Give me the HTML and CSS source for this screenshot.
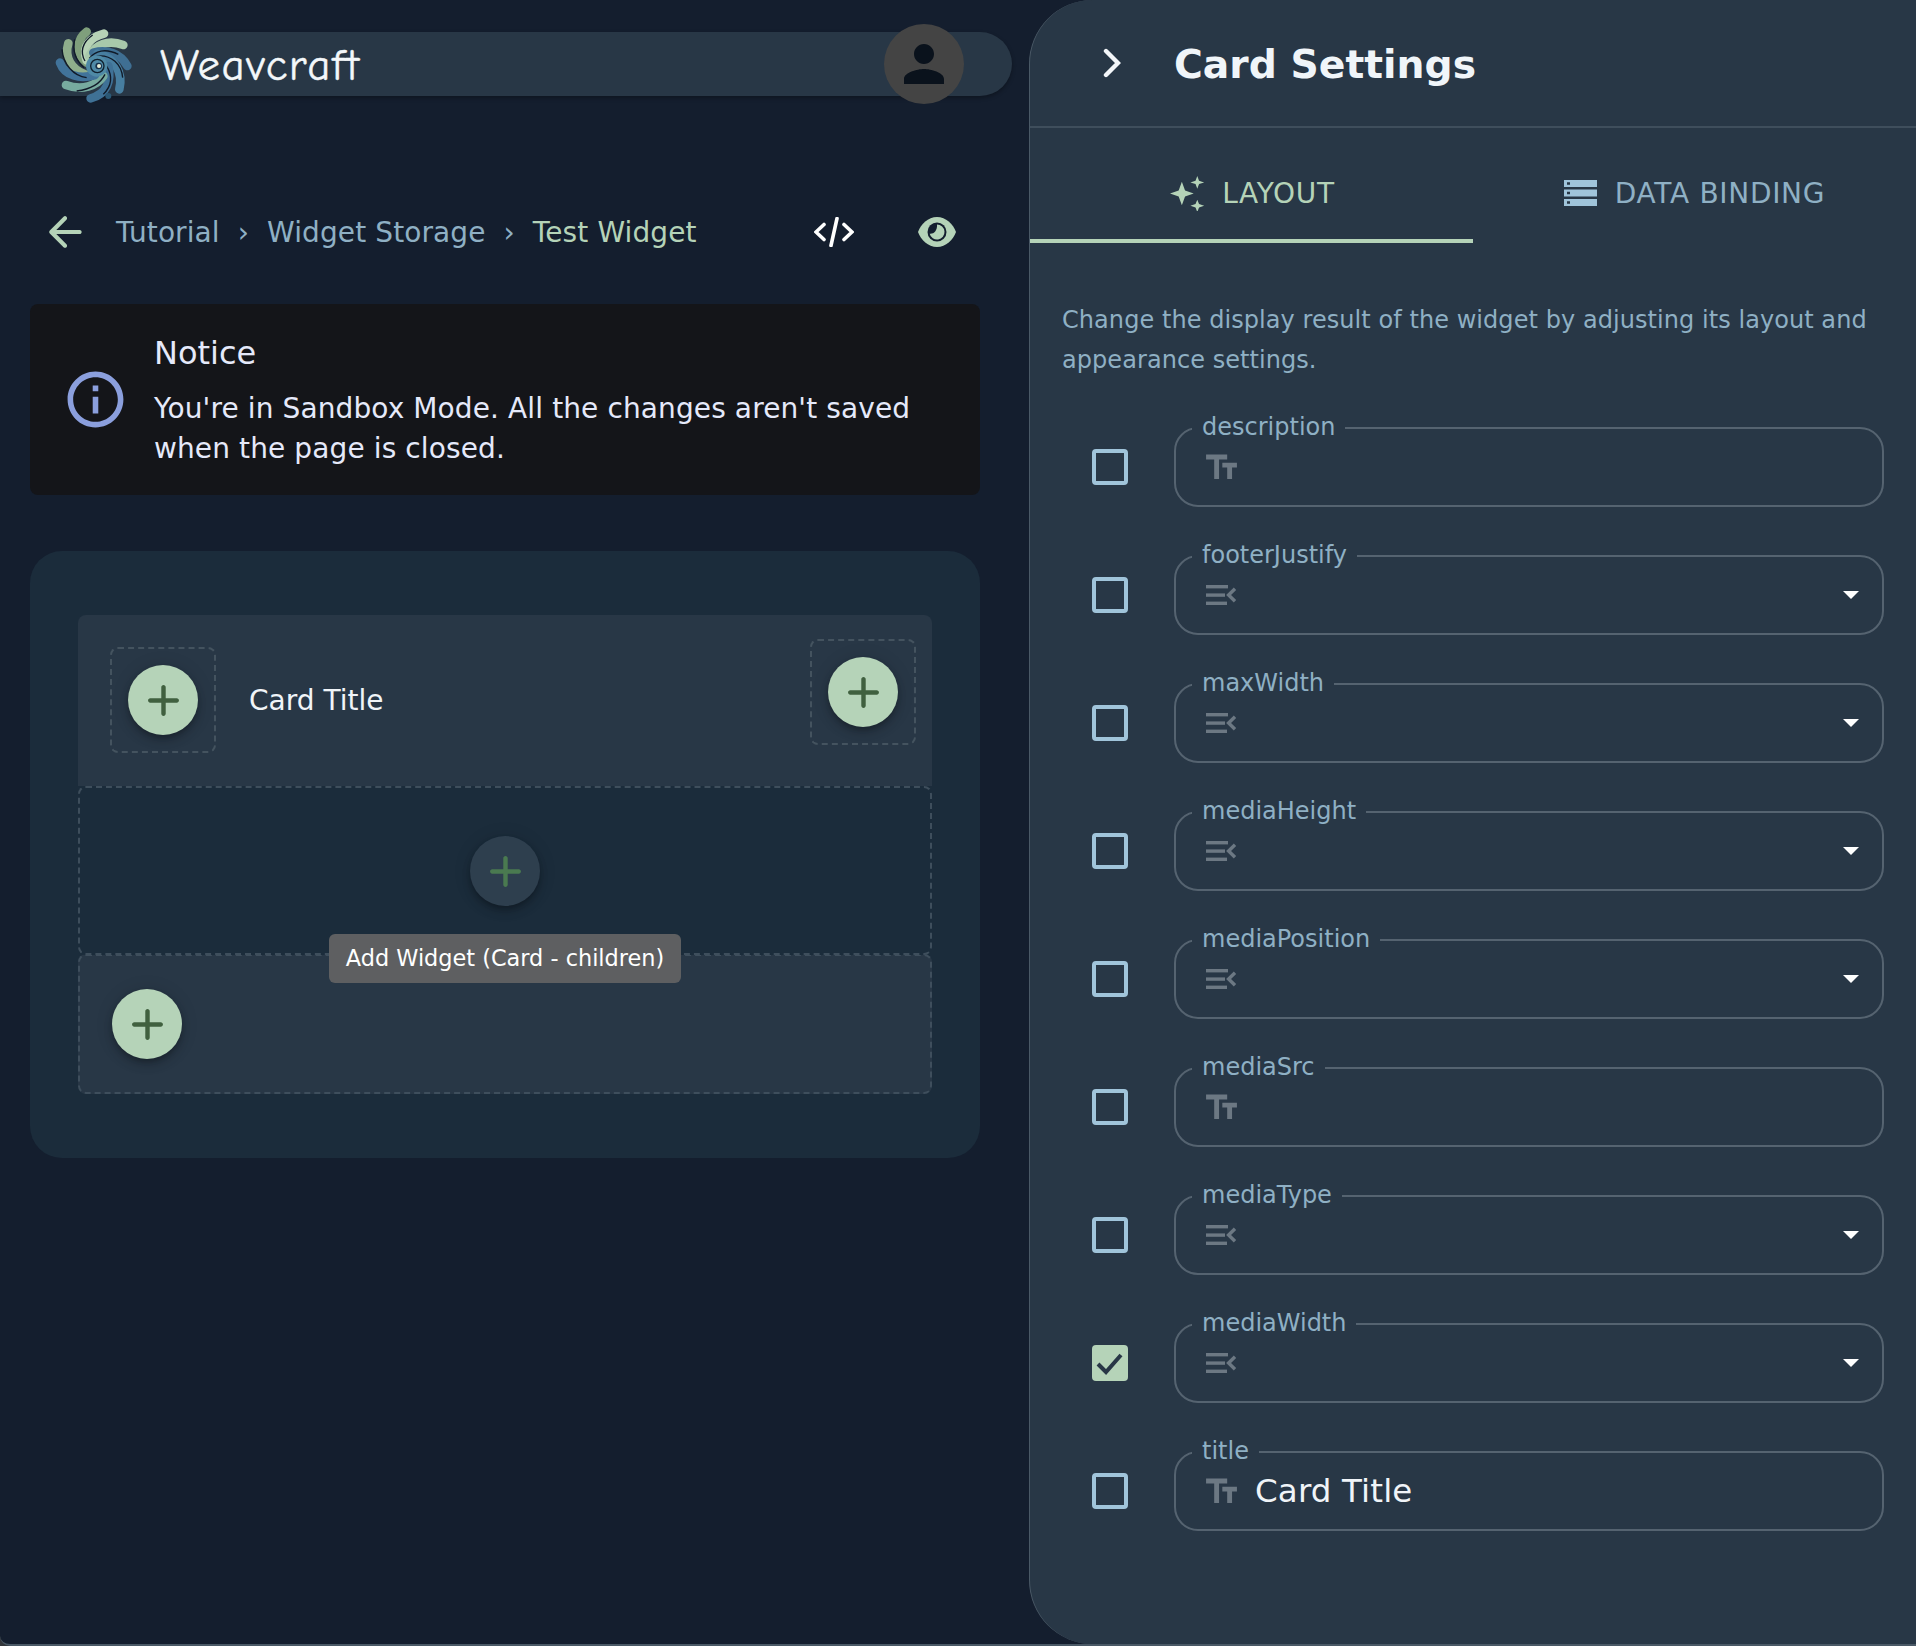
FILE: index.html
```html
<!DOCTYPE html>
<html lang="en">
<head>
<meta charset="utf-8">
<title>Weavcraft</title>
<link rel="stylesheet" href="styles.css">
</head>
<body>
<svg class="defs" width="0" height="0">
  <defs>
    <path id="i-add" d="M18 13h-5v5c0 .55-.45 1-1 1s-1-.45-1-1v-5H6c-.55 0-1-.45-1-1s.45-1 1-1h5V6c0-.55.45-1 1-1s1 .45 1 1v5h5c.55 0 1 .45 1 1s-.45 1-1 1z"/>
    <path id="i-text" d="M2.5 4v3h5v12h3V7h5V4h-13zm19 5h-9v3h3v7h3v-7h3V9z"/>
    <g id="i-sort">
      <rect x="0" y="0" width="22" height="3.4"/>
      <rect x="0" y="8.4" width="19" height="3.4"/>
      <rect x="0" y="16.6" width="21" height="3.4"/>
      <path d="M29 3.800l-6.400 6.200 6.400 6.200" fill="none" stroke="currentColor" stroke-width="3.400"/>
    </g>
  </defs>
</svg>
<main class="app">
  <section class="left">
    <header class="bar">
      <svg class="logo" viewBox="0 0 330 300" aria-hidden="true">
        <g fill="none" stroke-linecap="round" stroke-width="26">
          <path d="M85 97C72 140 95 175 135 190" stroke="#8fae8c"/>
          <path d="M140 62C108 85 108 130 140 155" stroke="#7f9f7c"/>
          <path d="M192 68C150 80 125 105 140 148" stroke="#b7d3b6"/>
          <path d="M250 102C205 85 165 100 148 135" stroke="#a9c9ab"/>
          <path d="M262 165C240 125 200 115 160 125" stroke="#3f6f93"/>
          <path d="M238 235C250 185 225 140 172 128" stroke="#477ea0"/>
          <path d="M152 262C200 250 215 210 205 165" stroke="#3f7196"/>
          <path d="M78 222C125 240 170 225 190 195" stroke="#77ab9f"/>
          <path d="M60 155C75 195 120 205 165 192" stroke="#41739a"/>
        </g>
        <g fill="none" stroke="#101a28" stroke-width="4">
          <path d="M66 115C70 160 100 195 140 200"/>
          <path d="M104 85C95 125 110 150 132 170"/>
          <path d="M158 72C125 95 120 125 135 150"/>
          <path d="M235 130C195 110 165 120 148 142"/>
          <path d="M248 200C245 160 215 130 170 135"/>
          <path d="M190 250C215 225 218 195 200 165"/>
          <path d="M110 240C150 235 180 220 195 190"/>
        </g>
        <circle cx="205" cy="255" r="9" fill="#2b5875"/>
        <circle cx="170" cy="165" r="32" fill="#4f8aa6"/>
        <circle cx="172" cy="165" r="20" fill="none" stroke="#10202e" stroke-width="4"/>
        <circle cx="176" cy="165" r="10" fill="#16304a"/>
        <circle cx="177" cy="165" r="6" fill="#e6efd9"/>
      </svg>
      <span class="brand">Weavcraft</span>
      <span class="avatar">
        <svg viewBox="0 0 24 24" class="avatar-icon"><path d="M12 12c2.21 0 4-1.79 4-4s-1.79-4-4-4-4 1.79-4 4 1.79 4 4 4zm0 2c-2.67 0-8 1.34-8 4v2h16v-2c0-2.66-5.33-4-8-4z"/></svg>
      </span>
    </header>

    <nav class="crumbs">
      <svg class="back" viewBox="0 0 24 24"><path d="M19 11H7.83l4.88-4.88c.39-.39.39-1.03 0-1.42a.9959.9959 0 0 0-1.41 0l-6.59 6.59c-.39.39-.39 1.02 0 1.41l6.59 6.59c.39.39 1.02.39 1.41 0 .39-.39.39-1.02 0-1.41L7.83 13H19c.55 0 1-.45 1-1s-.45-1-1-1z"/></svg>
      <ol class="trail">
        <li>Tutorial</li>
        <li class="sep">›</li>
        <li>Widget Storage</li>
        <li class="sep">›</li>
        <li class="current">Test Widget</li>
      </ol>
      <svg class="code" viewBox="0 0 40 30"><path d="M10 7.5L2 15l8 7.5M30 7.5L38 15l-8 7.5M23 1.5L17 28.5" fill="none" stroke="#fff" stroke-width="3.6" stroke-linecap="round" stroke-linejoin="miter"/></svg>
      <svg class="eye" viewBox="0 0 38 30"><path d="M19 0C10 0 3 7 0 15c3 8 10 15 19 15s16-7 19-15C35 7 28 0 19 0z" fill="#b5d3b8"/><circle cx="19" cy="15" r="9.5" fill="#141e2e"/><path d="M19 7.5a7.5 7.5 0 1 1-7.3 9.2c3.6.6 7.8-2.6 7.3-9.2z" fill="#b5d3b8"/></svg>
    </nav>

    <aside class="notice">
      <svg class="notice-icon" viewBox="0 0 24 24"><path d="M11 7h2v2h-2zm0 4h2v6h-2zm1-9C6.48 2 2 6.48 2 12s4.48 10 10 10 10-4.48 10-10S17.52 2 12 2zm0 18c-4.41 0-8-3.59-8-8s3.59-8 8-8 8 3.59 8 8-3.59 8-8 8z"/></svg>
      <div class="notice-body">
        <h2 class="notice-title">Notice</h2>
        <p class="notice-text">You're in Sandbox Mode. All the changes aren't saved when the page is closed.</p>
      </div>
    </aside>

    <div class="canvas">
      <article class="card">
        <div class="card-head">
          <div class="slot">
            <button class="fab"><svg viewBox="0 0 24 24"><use href="#i-add"/></svg></button>
          </div>
          <span class="card-title">Card Title</span>
          <div class="slot slot-end">
            <button class="fab"><svg viewBox="0 0 24 24"><use href="#i-add"/></svg></button>
          </div>
        </div>
        <div class="card-body">
          <button class="fab fab-off"><svg viewBox="0 0 24 24"><use href="#i-add"/></svg></button>
          <div class="tooltip">Add Widget (Card - children)</div>
        </div>
        <div class="card-foot">
          <button class="fab"><svg viewBox="0 0 24 24"><use href="#i-add"/></svg></button>
        </div>
      </article>
    </div>
  </section>

  <section class="panel">
    <header class="panel-head">
      <svg class="chev" viewBox="0 0 18 30"><path d="M3 3l12 12L3 27" fill="none" stroke="#f3f6f9" stroke-width="4.4" stroke-linecap="round" stroke-linejoin="miter"/></svg>
      <h1 class="panel-title">Card Settings</h1>
    </header>
    <div class="tabs">
      <div class="tab tab-on">
        <svg class="tab-icon spark" viewBox="0 0 35 34"><path d="M12.5 5.500L15.600 14l8.400 3-8.400 3-3.100 8.500L9.400 20 1 17l8.400-3zM27.500 0l1.700 4.500 5 1.700-5 1.600L27.500 12.500 25.800 7.800l-5-1.600 5-1.700zM27.500 23l1.700 4.300 5 1.700-5 1.600L27.500 35l-1.700-4.400-5-1.600 5-1.700z" fill="currentColor"/></svg>
        <span>LAYOUT</span>
      </div>
      <div class="tab">
        <svg class="tab-icon" viewBox="0 0 33 26"><path d="M0 0h33v7H0zM0 9.500h33v7H0zM0 19h33v7H0z" fill="#a0c4da"/><path d="M3 2.200h3v2.600H3zM3 11.700h3v2.600H3zM3 21.200h3v2.600H3z" fill="#283746"/></svg>
        <span>DATA BINDING</span>
      </div>
    </div>
    <p class="intro">Change the display result of the widget by adjusting its layout and appearance settings.</p>
    <div class="props">
      <div class="prop"><span class="check"></span><div class="field"><label class="field-label">description</label><svg class="t-icon" viewBox="0 0 24 24"><use href="#i-text"/></svg></div></div>
      <div class="prop"><span class="check"></span><div class="field"><label class="field-label">footerJustify</label><svg class="s-icon" viewBox="0 0 30 20"><use href="#i-sort"/></svg><i class="caret"></i></div></div>
      <div class="prop"><span class="check"></span><div class="field"><label class="field-label">maxWidth</label><svg class="s-icon" viewBox="0 0 30 20"><use href="#i-sort"/></svg><i class="caret"></i></div></div>
      <div class="prop"><span class="check"></span><div class="field"><label class="field-label">mediaHeight</label><svg class="s-icon" viewBox="0 0 30 20"><use href="#i-sort"/></svg><i class="caret"></i></div></div>
      <div class="prop"><span class="check"></span><div class="field"><label class="field-label">mediaPosition</label><svg class="s-icon" viewBox="0 0 30 20"><use href="#i-sort"/></svg><i class="caret"></i></div></div>
      <div class="prop"><span class="check"></span><div class="field"><label class="field-label">mediaSrc</label><svg class="t-icon" viewBox="0 0 24 24"><use href="#i-text"/></svg></div></div>
      <div class="prop"><span class="check"></span><div class="field"><label class="field-label">mediaType</label><svg class="s-icon" viewBox="0 0 30 20"><use href="#i-sort"/></svg><i class="caret"></i></div></div>
      <div class="prop"><span class="check check-on"><svg viewBox="0 0 36 36"><path d="M6 19l8 8L29 10" fill="none" stroke="#283746" stroke-width="4"/></svg></span><div class="field"><label class="field-label">mediaWidth</label><svg class="s-icon" viewBox="0 0 30 20"><use href="#i-sort"/></svg><i class="caret"></i></div></div>
      <div class="prop"><span class="check"></span><div class="field"><label class="field-label">title</label><svg class="t-icon" viewBox="0 0 24 24"><use href="#i-text"/></svg><span class="field-value">Card Title</span></div></div>
    </div>
  </section>
</main>
</body>
</html>
```

FILE: styles.css
```css
* { box-sizing: border-box; }
html, body { margin: 0; height: 100%; }
body {
  background: #33363a;
  color: #f0f4f8;
  font-family: "DejaVu Sans", sans-serif;
  overflow: hidden;
}
.defs { position: absolute; }
.app {
  display: flex;
  height: 1646px;
  background: #141e2e;
  border-bottom: 2px solid #4a5966;
  border-radius: 0 0 0 10px;
}

.left { width: 1029px; flex-shrink: 0; padding-top: 32px; }

.bar {
  display: flex;
  align-items: center;
  width: 1012px;
  height: 64px;
  background: #283746;
  border-radius: 0 32px 32px 0;
  box-shadow: 0 2px 4px rgba(0, 0, 0, .3);
  padding-left: 40px;
}
.logo { width: 110px; height: 100px; margin-top: -7px; flex-shrink: 0; }
.brand {
  margin: 2px 0 0 10px;
  font-family: "Comic Neue", "Comic Sans MS", cursive;
  font-size: 45px;
  letter-spacing: 1.5px;
  font-variant-ligatures: none;
  -webkit-text-stroke: .4px #f3f7fa;
  color: #f3f7fa;
}
.avatar {
  display: flex;
  align-items: center;
  justify-content: center;
  width: 80px;
  height: 80px;
  margin-left: auto;
  margin-right: 48px;
  border-radius: 50%;
  background: #444;
  flex-shrink: 0;
}
.avatar-icon { width: 60px; height: 60px; fill: #0a121c; }

.crumbs {
  display: flex;
  align-items: center;
  height: 64px;
  margin-top: 104px;
  padding-left: 40px;
}
.back { width: 50px; height: 50px; fill: #b5d3b8; flex-shrink: 0; }
.trail {
  display: flex;
  align-items: center;
  gap: 18px;
  list-style: none;
  margin: 0 0 0 26px;
  padding: 0;
  font-size: 28px;
  letter-spacing: .1px;
  color: #8fb0c4;
  width: 698px;
}
.current { color: #b5d3b8; }
.code { width: 40px; height: 30px; flex-shrink: 0; }
.eye { width: 38px; height: 30px; margin-left: 64px; flex-shrink: 0; }

.notice {
  display: flex;
  align-items: center;
  width: 950px;
  height: 191px;
  margin: 40px 0 0 30px;
  padding-left: 32px;
  background: #141519;
  border-radius: 8px;
}
.notice-icon { width: 67px; height: 67px; fill: #8b9fdd; flex-shrink: 0; }
.notice-body { margin-left: 25px; padding-bottom: 2px; color: #e5e9fa; }
.notice-title { margin: 0 0 12px; font-size: 32px; font-weight: 400; line-height: 48px; }
.notice-text { margin: 0; font-size: 28px; line-height: 40px; letter-spacing: .11px; width: 790px; }

.canvas {
  width: 950px;
  height: 607px;
  margin: 56px 0 0 30px;
  padding: 64px 48px;
  background: #1b2c3b;
  border-radius: 32px;
}
.card { width: 854px; height: 479px; display: flex; flex-direction: column; }
.card-head {
  display: flex;
  height: 171px;
  padding: 32px 16px 0 32px;
  background: #283746;
  border-radius: 8px 8px 0 0;
}
.slot {
  display: flex;
  align-items: center;
  justify-content: center;
  width: 106px;
  height: 106px;
  border: 2px dashed #44535f;
  border-radius: 8px;
  flex-shrink: 0;
}
.slot-end { margin: -8px 0 0 auto; }
.card-title {
  margin: 0 0 0 33px;
  height: 108px;
  line-height: 108px;
  font-size: 28px;
}
.fab {
  display: flex;
  align-items: center;
  justify-content: center;
  width: 70px;
  height: 70px;
  padding: 0;
  border: 0;
  border-radius: 50%;
  background: #b5d3b8;
  fill: #40603f;
  box-shadow: 0 3px 5px -1px rgba(0,0,0,.2), 0 6px 10px 0 rgba(0,0,0,.14), 0 1px 18px 0 rgba(0,0,0,.12);
  flex-shrink: 0;
}
.fab svg { width: 53px; height: 53px; }
.fab-off { background: #2e3f4e; fill: #4a7a50; }
.card-body {
  position: relative;
  display: flex;
  justify-content: center;
  height: 169px;
  padding-top: 48px;
  background: #1b2c3b;
  border: 2px dashed #3e4e5c;
  border-radius: 8px;
}
.tooltip {
  position: absolute;
  left: 50%;
  top: 146px;
  transform: translateX(-50%);
  width: 352px;
  height: 49px;
  line-height: 49px;
  text-align: center;
  font-size: 22.400px;
  color: #fff;
  background: #5e5f61;
  border-radius: 6px;
  white-space: nowrap;
  z-index: 2;
}
.card-foot {
  display: flex;
  height: 140px;
  margin-top: -1px;
  padding: 33px 0 0 32px;
  background: #283746;
  border: 2px dashed #3e4e5c;
  border-radius: 8px;
}

.panel {
  flex: 1;
  background: #283746;
  border-left: 1px solid #4a5966;
  border-radius: 64px 0 0 64px;
}
.panel-head {
  display: flex;
  align-items: center;
  height: 128px;
  padding-left: 73px;
  border-bottom: 2px solid #3f4e5c;
}
.chev { width: 18px; height: 30px; flex-shrink: 0; }
.panel-title {
  margin: 2px 0 0 53px;
  font-size: 39.300px;
  font-weight: 700;
  color: #f0f5f9;
}
.tabs { display: flex; height: 115px; }
.tab {
  flex: 1;
  display: flex;
  align-items: center;
  justify-content: center;
  gap: 18px;
  padding-top: 19px;
  font-size: 28px;
  letter-spacing: .7px;
  color: #8fb0c4;
  border-bottom: 4px solid transparent;
}
.tab-on { color: #b5d3b8; border-bottom-color: #b5d3b8; }
.tab-icon { width: 33px; height: 26px; }
.spark { width: 36px; height: 35px; margin: 0 -1px 0 1px; }
.intro {
  margin: 57px 32px 47px;
  font-size: 24px;
  line-height: 40px;
  letter-spacing: .06px;
  color: #8fb0c4;
}
.props { display: flex; flex-direction: column; gap: 48px; padding: 0 32px 0 62px; }
.prop { display: flex; align-items: center; height: 80px; gap: 46px; }
.check {
  width: 36px;
  height: 36px;
  border: 4px solid #a0c4da;
  border-radius: 4px;
  flex-shrink: 0;
}
.check-on { border: 0; background: #b5d3b8; }
.check-on svg { display: block; width: 36px; height: 36px; }
.field {
  position: relative;
  flex: 1;
  display: flex;
  align-items: center;
  height: 80px;
  padding-left: 30px;
  border: 2px solid #556370;
  border-radius: 24px;
}
.field-label {
  position: absolute;
  left: 16px;
  top: -17px;
  padding: 0 10px;
  height: 30px;
  line-height: 30px;
  font-size: 24px;
  color: #8fb0c4;
  background: #283746;
}
.t-icon { width: 39px; height: 39px; margin-left: -4px; fill: #6c7883; flex-shrink: 0; }
.s-icon { width: 30px; height: 20px; fill: #6c7883; color: #6c7883; flex-shrink: 0; overflow: visible; }
.field-value { margin-left: 14px; font-size: 32.500px; letter-spacing: .15px; color: #f0f4f8; }
.caret {
  margin-left: auto;
  margin-right: 23px;
  width: 0;
  height: 0;
  border-left: 8px solid transparent;
  border-right: 8px solid transparent;
  border-top: 8px solid #fff;
}
```
